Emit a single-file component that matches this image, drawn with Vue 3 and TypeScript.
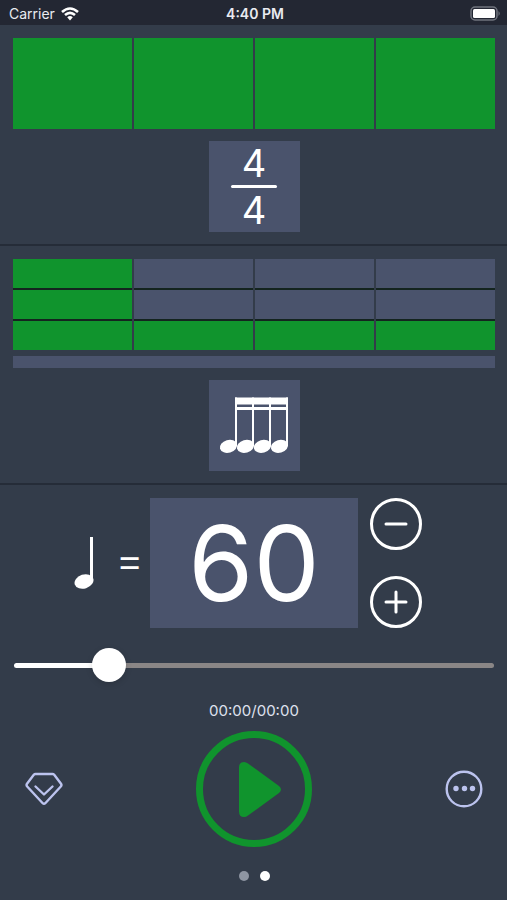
<script setup lang="ts">
import { computed, ref } from 'vue'

const MIN_TEMPO = 20
const MAX_TEMPO = 250
const STEM_POSITIONS = [27, 44, 61, 78]

const tempo = ref(60)
const playing = ref(false)
const page = ref(1)
const beats = ref([true, true, true, true])
const levels = ref([3, 1, 1, 1])

const fill = computed(() => `${((tempo.value - MIN_TEMPO) / (MAX_TEMPO - MIN_TEMPO)) * 100}%`)

function step(amount: number) {
  tempo.value = Math.min(MAX_TEMPO, Math.max(MIN_TEMPO, tempo.value + amount))
}
</script>

<template>
  <div class="app">
    <header class="status">
      <div class="carrier">
        <span>Carrier</span>
        <svg class="wifi" viewBox="0 0 18 14" aria-hidden="true">
          <path d="M1 5 Q9 -2 17 5" />
          <path d="M4 8 Q9 3.6 14 8" />
          <path class="wifi-dot" d="M6.2 10.2 Q9 8 11.8 10.2 L9 13.4 Z" />
        </svg>
      </div>
      <time class="clock">4:40 PM</time>
      <svg class="battery" viewBox="0 0 31 15" aria-hidden="true">
        <rect class="battery-case" x="1" y="1" width="26" height="13" rx="4" />
        <rect class="battery-level" x="3" y="3" width="22" height="9" rx="1.5" />
        <path class="battery-tip" d="M28.5 5 Q31 7.5 28.5 10 Z" />
      </svg>
    </header>

    <main>
      <section class="panel">
        <div class="beats">
          <button
            v-for="(on, i) in beats"
            :key="i"
            type="button"
            class="beat"
            :class="{ on }"
            :aria-label="`Beat ${i + 1}`"
            @click="beats[i] = !on"
          ></button>
        </div>
        <button type="button" class="tile signature" aria-label="Time signature 4/4">
          <span class="figure">4</span>
          <span class="rule"></span>
          <span class="figure">4</span>
        </button>
      </section>

      <section class="panel">
        <div class="levels">
          <div v-for="(level, i) in levels" :key="i" class="level-column">
            <button
              v-for="n in 3"
              :key="n"
              type="button"
              class="level"
              :class="{ on: 4 - n <= level }"
              :aria-label="`Beat ${i + 1} level ${4 - n}`"
              @click="levels[i] = 4 - n"
            ></button>
          </div>
        </div>
        <div class="progress"></div>
        <button type="button" class="tile" aria-label="Sixteenth notes">
          <svg class="notes" viewBox="0 0 91 91" aria-hidden="true">
            <rect x="26" y="17.5" width="53" height="7" />
            <rect x="26" y="27" width="53" height="3" />
            <g v-for="x in STEM_POSITIONS" :key="x">
              <rect :x="x - 1" y="17.5" width="2" height="48" />
              <ellipse
                :cx="x - 7.5"
                cy="66.3"
                rx="8.8"
                ry="6.4"
                :transform="`rotate(-16 ${x - 7.5} 66.3)`"
              />
            </g>
          </svg>
        </button>
      </section>

      <section class="player">
        <div class="tempo">
          <div class="unit">
            <svg class="quarter" viewBox="0 0 20 54" aria-hidden="true">
              <rect x="16" y="1" width="3" height="44" />
              <ellipse cx="10" cy="45.5" rx="9.7" ry="7" transform="rotate(-18 10 45.5)" />
            </svg>
            <span class="equals">=</span>
          </div>
          <button type="button" class="bpm">{{ tempo }}</button>
          <div class="steppers">
            <button type="button" class="round" aria-label="Slower" @click="step(-1)">
              <svg viewBox="0 0 52 52" aria-hidden="true">
                <circle cx="26" cy="26" r="24.5" />
                <path d="M16 26 H36" />
              </svg>
            </button>
            <button type="button" class="round" aria-label="Faster" @click="step(1)">
              <svg viewBox="0 0 52 52" aria-hidden="true">
                <circle cx="26" cy="26" r="24.5" />
                <path d="M16 26 H36 M26 16 V36" />
              </svg>
            </button>
          </div>
        </div>

        <input
          v-model.number="tempo"
          class="slider"
          type="range"
          :min="MIN_TEMPO"
          :max="MAX_TEMPO"
          aria-label="Tempo"
          :style="{ '--fill': fill }"
        />

        <p class="elapsed">00:00/00:00</p>

        <div class="controls">
          <button type="button" class="icon" aria-label="Premium">
            <svg viewBox="0 -1 38 38" aria-hidden="true">
              <path d="M10.5 3 H27.5 Q28.5 3 29.2 3.8 L36 12.8 Q37 14.2 35.8 15.5 L20.3 32.2 Q19 33.5 17.7 32.2 L2.2 15.5 Q1 14.2 2 12.8 L8.8 3.8 Q9.5 3 10.5 3 Z" />
              <path d="M10.5 15.5 L19 23.5 L27.5 15.5" />
            </svg>
          </button>
          <button
            type="button"
            class="play"
            :aria-label="playing ? 'Stop' : 'Play'"
            @click="playing = !playing"
          >
            <svg viewBox="0 0 116 116" aria-hidden="true">
              <circle cx="58" cy="58" r="54.5" />
              <path d="M43 36.5 Q43 31 48 31 Q50 31 52 32.5 L83 55 Q87 58.5 83 62 L52 84.5 Q50 86 48 86 Q43 86 43 80.5 Z" />
            </svg>
          </button>
          <button type="button" class="icon" aria-label="More">
            <svg viewBox="0 0 38 38" aria-hidden="true">
              <circle cx="19" cy="19" r="17.3" />
              <circle class="dot" cx="11" cy="18.5" r="2.7" />
              <circle class="dot" cx="19.5" cy="18.5" r="2.7" />
              <circle class="dot" cx="27.5" cy="18.5" r="2.7" />
            </svg>
          </button>
        </div>

        <nav class="pages" aria-label="Pages">
          <button
            v-for="n in 2"
            :key="n"
            type="button"
            class="page"
            :class="{ current: page === n - 1 }"
            :aria-label="`Page ${n}`"
            @click="page = n - 1"
          ></button>
        </nav>
      </section>
    </main>
  </div>
</template>

<style>
body {
  margin: 0;
  background: #333c4a;
}
</style>

<style scoped>
.app {
  min-height: 100vh;
  background: #333c4a;
  color: #fff;
  font-family: Inter, "Liberation Sans", sans-serif;
}

button {
  margin: 0;
  padding: 0;
  border: 0;
  background: none;
  color: inherit;
  font-family: inherit;
  cursor: pointer;
}

svg {
  display: block;
}

.status {
  display: grid;
  grid-template-columns: 1fr auto 1fr;
  align-items: center;
  height: 25px;
  padding: 2px 6px 0 9px;
  box-sizing: border-box;
  background: #232733;
  color: #e9ebf1;
  font-size: 14px;
  line-height: 20px;
}

.carrier {
  display: flex;
  align-items: center;
  gap: 6px;
}

.wifi {
  width: 18px;
  height: 14px;
  fill: none;
  stroke: #fff;
  stroke-width: 2.6;
}

.wifi-dot {
  fill: #fff;
  stroke: none;
}

.clock {
  font-weight: 600;
}

.battery {
  justify-self: end;
  width: 31px;
  height: 15px;
}

.battery-case {
  fill: none;
  stroke: #70747e;
  stroke-width: 1.5;
}

.battery-level {
  fill: #fff;
}

.battery-tip {
  fill: #70747e;
}

.panel {
  display: flex;
  flex-direction: column;
  align-items: center;
  padding: 13px 12px 12px 13px;
  border-bottom: 2px solid #252c38;
}

.beats,
.levels {
  display: grid;
  grid-template-columns: repeat(4, 1fr);
  gap: 2px;
  width: 100%;
  height: 91px;
}

.beat,
.level {
  background: #4a536c;
}

.beat.on,
.level.on {
  background: #10942d;
}

.level-column {
  display: grid;
  grid-template-rows: repeat(3, 1fr);
  gap: 2px;
  background: #14241f;
}

.progress {
  width: 100%;
  height: 12px;
  margin-top: 6px;
  background: #4a536c;
}

.tile {
  display: flex;
  flex-direction: column;
  align-items: center;
  justify-content: center;
  width: 91px;
  height: 91px;
  margin-top: 12px;
  background: #4a536c;
}

.signature {
  gap: 3px;
}

.figure {
  height: 38px;
  font-size: 38px;
  line-height: 38px;
}

.rule {
  width: 46px;
  height: 3px;
  border-radius: 2px;
  background: #fff;
}

.notes {
  width: 91px;
  height: 91px;
  fill: #fff;
}

.player {
  padding: 13px 13px 18px 14px;
}

.tempo {
  display: grid;
  grid-template-columns: 1fr 208px 1fr;
}

.unit {
  display: flex;
  align-items: center;
  justify-content: flex-end;
  gap: 21px;
  padding-right: 6px;
}

.quarter {
  width: 20px;
  height: 54px;
  fill: #fff;
}

.equals {
  padding-bottom: 6px;
  font-size: 44px;
  line-height: 44px;
  font-weight: 300;
}

.bpm {
  height: 130px;
  background: #4a536c;
  font-size: 105px;
  line-height: 130px;
}

.steppers {
  display: flex;
  flex-direction: column;
  justify-content: space-between;
  align-items: flex-start;
  padding-left: 12px;
}

.round {
  width: 52px;
  height: 52px;
}

.round svg {
  fill: none;
  stroke: #fff;
  stroke-width: 3;
  stroke-linecap: round;
}

.slider {
  display: block;
  width: 100%;
  height: 34px;
  margin: 20px 0 0;
  appearance: none;
  background: none;
}

.slider::-webkit-slider-runnable-track {
  height: 5px;
  border-radius: 3px;
  background: linear-gradient(to right, #fff var(--fill), #8a8686 var(--fill));
}

.slider::-webkit-slider-thumb {
  appearance: none;
  width: 34px;
  height: 34px;
  margin-top: -15px;
  border-radius: 50%;
  background: #fff;
  box-shadow: 0 2px 6px rgba(0, 0, 0, 0.15);
}

.elapsed {
  margin: 21px 0 12px;
  color: #dfe1ee;
  font-size: 15px;
  line-height: 16px;
  text-align: center;
}

.controls {
  display: flex;
  align-items: center;
  justify-content: space-between;
  padding: 0 11px;
}

.icon {
  width: 38px;
  height: 38px;
}

.icon svg {
  fill: none;
  stroke: #bcc3ee;
  stroke-width: 2.4;
  stroke-linecap: round;
  stroke-linejoin: round;
}

.icon .dot {
  fill: #bcc3ee;
  stroke: none;
}

.play {
  width: 116px;
  height: 116px;
}

.play circle {
  fill: none;
  stroke: #10942d;
  stroke-width: 7;
}

.play path {
  fill: #10942d;
}

.pages {
  display: flex;
  justify-content: center;
  gap: 11px;
  margin-top: 24px;
}

.page {
  width: 10px;
  height: 10px;
  border-radius: 50%;
  background: #8e95a2;
}

.page.current {
  background: #fff;
}
</style>
